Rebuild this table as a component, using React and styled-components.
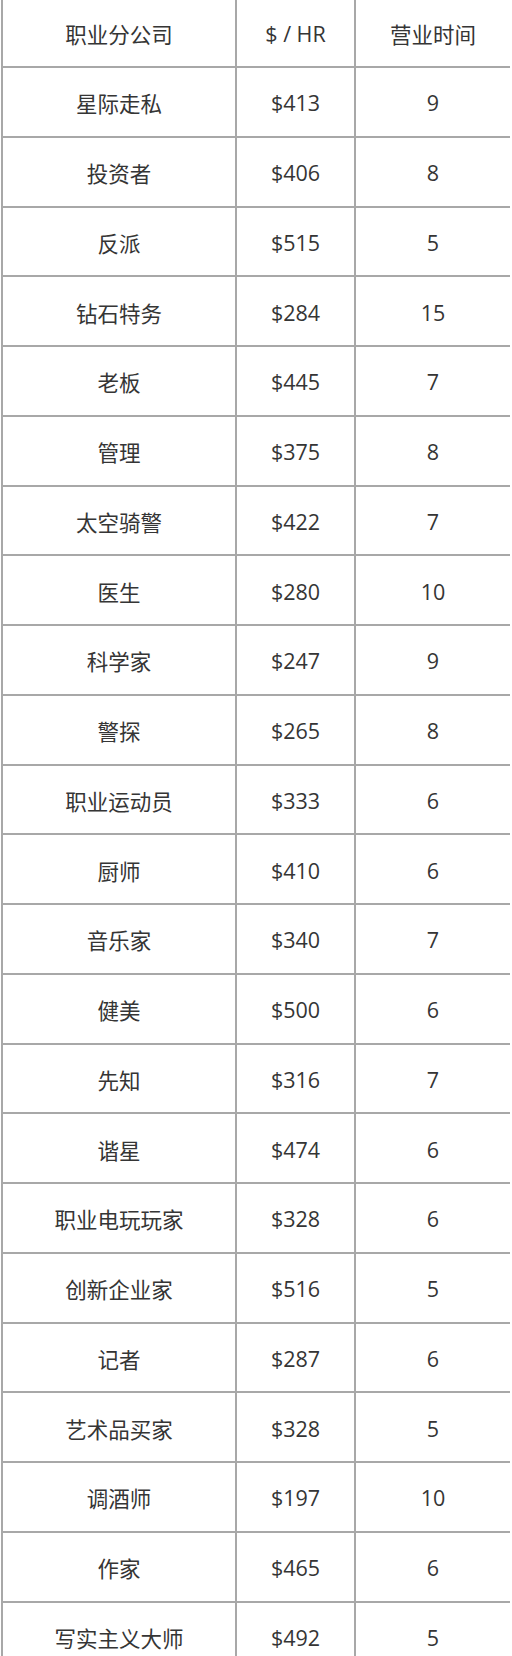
import React from "react";
import styled, { createGlobalStyle } from "styled-components";

const Global = createGlobalStyle`
  html, body { margin: 0; padding: 0; background: #fff; overflow: hidden; }
  body { font-family: "Open Sans", "Noto Sans CJK SC", sans-serif; }
`;

const Table = styled.div`
  display: grid;
  grid-template-columns: 232px 117px 154px;
  grid-template-rows: 66px;
  grid-auto-rows: 67.75px;
  gap: 2px;
  width: 509px;
  margin-left: 1px;
  padding: 0 2px 2px 2px;
  background: #a8a8a8;
  box-sizing: border-box;
`;

const Cell = styled.div`
  background: #fff;
  display: flex;
  align-items: center;
  justify-content: center;
  color: #353535;
  font-size: 21.5px;
  font-family: "Open Sans", "Noto Sans CJK SC", sans-serif;
  padding-top: ${(p) => (p.$head ? "0" : "2px")};
  box-sizing: border-box;
`;

const rows = [
  ["星际走私", "$413", "9"],
  ["投资者", "$406", "8"],
  ["反派", "$515", "5"],
  ["钻石特务", "$284", "15"],
  ["老板", "$445", "7"],
  ["管理", "$375", "8"],
  ["太空骑警", "$422", "7"],
  ["医生", "$280", "10"],
  ["科学家", "$247", "9"],
  ["警探", "$265", "8"],
  ["职业运动员", "$333", "6"],
  ["厨师", "$410", "6"],
  ["音乐家", "$340", "7"],
  ["健美", "$500", "6"],
  ["先知", "$316", "7"],
  ["谐星", "$474", "6"],
  ["职业电玩玩家", "$328", "6"],
  ["创新企业家", "$516", "5"],
  ["记者", "$287", "6"],
  ["艺术品买家", "$328", "5"],
  ["调酒师", "$197", "10"],
  ["作家", "$465", "6"],
  ["写实主义大师", "$492", "5"],
];

export default function App() {
  return (
    <>
      <Global />
      <Table>
        <Cell $head>职业分公司</Cell>
        <Cell $head>$ / HR</Cell>
        <Cell $head>营业时间</Cell>
        {rows.map((r, i) => (
          <React.Fragment key={i}>
            <Cell>{r[0]}</Cell>
            <Cell>{r[1]}</Cell>
            <Cell>{r[2]}</Cell>
          </React.Fragment>
        ))}
      </Table>
    </>
  );
}
